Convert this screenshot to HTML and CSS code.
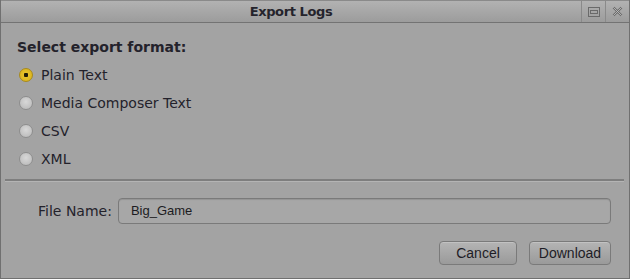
FILE: index.html
```html
<!DOCTYPE html>
<html>
<head>
  <meta charset="utf-8">
  <title>Export Logs</title>
  <link rel="stylesheet" href="styles.css">
</head>
<body>
  <div class="window">
    <div class="titlebar">
      <div class="title">Export Logs</div>
      <div class="title-btn">
        <svg width="12" height="10" viewBox="0 0 12 10"><rect x="0.5" y="0.5" width="11" height="9" fill="none" stroke="#6a6a6a"/><rect x="2.5" y="3.5" width="7" height="3" fill="none" stroke="#6a6a6a"/></svg>
      </div>
      <div class="title-btn">
        <svg width="11" height="11" viewBox="0 0 11 11"><path d="M1.5 1.5 L9.5 9.5 M9.5 1.5 L1.5 9.5" stroke="#6a6a6a" stroke-width="2.4"/><path d="M1.5 1.5 L9.5 9.5 M9.5 1.5 L1.5 9.5" stroke="#c4c4c4" stroke-width="0.8"/></svg>
      </div>
    </div>

    <div class="content">
      <div class="heading">Select export format:</div>
      <div class="options">
        <label class="option"><span class="radio checked"></span>Plain Text</label>
        <label class="option"><span class="radio"></span>Media Composer Text</label>
        <label class="option"><span class="radio"></span>CSV</label>
        <label class="option"><span class="radio"></span>XML</label>
      </div>
    </div>

    <div class="divider"></div>

    <div class="footer">
      <div class="field">
        <span class="field-label">File Name:</span>
        <div class="input">Big_Game</div>
      </div>
      <div class="buttons">
        <button class="btn btn-cancel">Cancel</button>
        <button class="btn btn-download">Download</button>
      </div>
    </div>
  </div>
</body>
</html>
```

FILE: styles.css
```css
* {
  box-sizing: border-box;
}

body {
  margin: 0px;
  padding: 0px;
  background: #8c8c8c;
  font-family: "DejaVu Sans", Verdana, sans-serif;
  font-size: 14px;
  color: #23222b;
}

.window {
  width: 630px;
  height: 279px;
  background: #a3a3a3;
  border: 1px solid #707070;
  border-top: none;
  display: flex;
  flex-direction: column;
}

.titlebar {
  height: 23px;
  display: flex;
  align-items: stretch;
  background: linear-gradient(#b2b2b2, #9c9c9c);
  border-top: 1px solid #8a8a8a;
  border-bottom: 1px solid #737373;
}

.title {
  flex: 1;
  text-align: center;
  line-height: 21px;
  font-weight: bold;
  color: #25242c;
  font-size: 13px;
  letter-spacing: -0.4px;
}

.title-btn {
  width: 24px;
  display: flex;
  align-items: center;
  justify-content: center;
  border-left: 1px solid #8a8a8a;
}

.content {
  padding: 15px 0px 0px 16px;
}

.heading {
  font-weight: bold;
  line-height: 18px;
}

.options {
  display: flex;
  flex-direction: column;
  padding-top: 5px;
}

.option {
  display: flex;
  align-items: center;
  height: 28px;
  padding-left: 2px;
}

.radio {
  width: 14px;
  height: 14px;
  border-radius: 50%;
  margin-right: 8px;
  background: radial-gradient(circle at 50% 40%, #d8d8d8, #b6b6b6);
  border: 1px solid #8e8e8e;
}

.radio.checked {
  background: radial-gradient(circle, #1e1a08 0px, #1e1a08 2px, #e4c12a 2.5px, #d6ae18 100%);
  border: 1px solid #a88a1c;
}

.divider {
  margin: 6px 5px 0px 4px;
  height: 3px;
  border-top: 2px solid #7e7e7e;
  border-bottom: 1px solid #b4b4b4;
}

.footer {
  display: flex;
  flex-direction: column;
  padding: 16px 18px 0px 37px;
}

.field {
  display: flex;
  align-items: center;
}

.field-label {
  margin-right: 6px;
}

.input {
  flex: 1;
  height: 26px;
  line-height: 24px;
  padding-left: 12px;
  font-family: "Liberation Sans", Arial, sans-serif;
  font-size: 13px;
  color: #1c1c22;
  background: #a7a7a7;
  border: 1px solid #7a7a7a;
  border-radius: 4px;
  box-shadow: inset 0px 1px 1px rgba(0, 0, 0, 0.12);
}

.buttons {
  display: flex;
  justify-content: flex-end;
  gap: 12px;
  margin-top: 17px;
}

.btn {
  height: 24px;
  padding: 0px;
  font-family: "Liberation Sans", Arial, sans-serif;
  font-size: 14px;
  color: #1e1d26;
  background: linear-gradient(#b4b4b4, #9a9a9a);
  border: 1px solid #7a7a7a;
  border-radius: 4px;
  box-shadow: inset 0px 1px 0px #c2c2c2;
}

.btn-cancel {
  width: 78px;
}

.btn-download {
  width: 82px;
}
```
